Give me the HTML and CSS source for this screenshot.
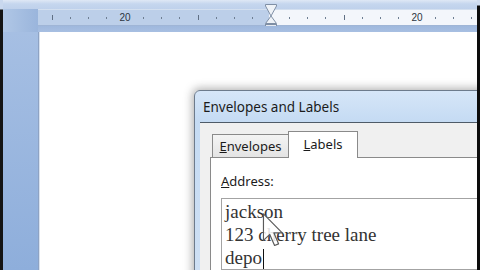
FILE: index.html
```html
<!DOCTYPE html>
<html>
<head>
<meta charset="utf-8">
<link rel="stylesheet" href="styles.css">
</head>
<body>
<div class="screen">
  <div class="edge edge-l"></div>
  <div class="main">
    <div class="topband"></div>
    <div class="ruler">
      <span class="cell"><i class="tall"></i></span>
      <span class="cell"><i class="dot"></i></span>
      <span class="cell"><i class="dot"></i></span>
      <span class="cell"><i class="dot"></i></span>
      <span class="cell num">20</span>
      <span class="cell"><i class="dot"></i></span>
      <span class="cell"><i class="dot"></i></span>
      <span class="cell"><i class="dot"></i></span>
      <span class="cell"><i class="tall"></i></span>
      <span class="cell"><i class="dot"></i></span>
      <span class="cell"><i class="dot"></i></span>
      <span class="cell"><i class="dot"></i></span>
      <span class="cell">
        <svg class="hourglass" width="12" height="27" viewBox="0 0 12 27">
          <path d="M0.5 0.5 H11.5 V2 L6 12 L0.5 2 Z" fill="#eef2f7" stroke="#7f8fa5"/>
          <path d="M6 12 L11.5 19.5 H0.5 Z" fill="#eef2f7" stroke="#7f8fa5"/>
          <rect x="0.5" y="20.5" width="11" height="6" fill="#e6ebf2" stroke="#7f8fa5"/>
        </svg>
      </span>
      <span class="cell"><i class="dot"></i></span>
      <span class="cell"><i class="dot"></i></span>
      <span class="cell"><i class="dot"></i></span>
      <span class="cell"><i class="tall"></i></span>
      <span class="cell"><i class="dot"></i></span>
      <span class="cell"><i class="dot"></i></span>
      <span class="cell"><i class="dot"></i></span>
      <span class="cell num">20</span>
      <span class="cell"><i class="dot"></i></span>
      <span class="cell"><i class="dot"></i></span>
      <span class="cell"><i class="dot"></i></span>
    </div>
    <div class="underband"></div>
    <div class="work">
      <div class="gutter"></div>
      <div class="page"></div>
    </div>

    <div class="dialog">
      <div class="titlebar">Envelopes and Labels</div>
      <div class="client">
        <div class="tabs">
          <div class="tab"><u>E</u>nvelopes</div>
          <div class="tab active"><u>L</u>abels</div>
        </div>
        <div class="panel">
          <div class="label"><u>A</u>ddress:</div>
          <div class="textbox">
            <div>jackson</div>
            <div>123 cherry tree lane</div>
            <div>depo<span class="caret"></span></div>
          </div>
        </div>
      </div>
    </div>

    <svg class="pointer" width="22" height="34" viewBox="0 0 12.5 20.5">
      <path d="M0.5 0.5 L0.5 16.5 L4.3 12.9 L7.2 19.6 L9.6 18.6 L6.8 12 L11.8 12 Z" fill="rgba(255,255,255,0.85)" stroke="#5a5a5a" stroke-width="0.7" stroke-linejoin="round"/>
    </svg>
  </div>
  <div class="edge edge-r"></div>
</div>
</body>
</html>
```
FILE: styles.css
```css
* { box-sizing: border-box; }
html, body { margin: 0; padding: 0; }
body { width: 480px; height: 270px; overflow: hidden; background: #a9c1e2; }

.screen {
  width: 480px;
  height: 270px;
  display: flex;
  overflow: hidden;
}

.edge { width: 3px; flex: none; background: #111; }
.edge-l { background: linear-gradient(#c9d8ee 0, #c9d8ee 9px, #141414 10px); }
.edge-r { background: linear-gradient(#cfdcef 0, #cfdcef 5px, #0c0c0c 6px); }

.main {
  position: relative;
  flex: 1;
  display: flex;
  flex-direction: column;
  overflow: hidden;
  background: linear-gradient(90deg, #b0c7e6 0, #9ab5dc 35px);
}

.topband {
  height: 9px;
  flex: none;
  background: linear-gradient(#dfe8f5, #c5d6ee 4px, #bfd1eb);
}

.ruler {
  height: 17px;
  flex: none;
  margin-left: 35px;
  padding-left: 4.9px;
  display: flex;
  align-items: center;
  border-top: 1px solid #d3dfef;
  border-bottom: 1px solid #9fb5d6;
  background: linear-gradient(90deg, #bccfe9 0, #bccfe9 231px, #f3f6fb 231px);
}

.cell {
  width: 18.25px;
  flex: none;
  height: 100%;
  display: flex;
  align-items: center;
  justify-content: center;
}

.dot { display: block; width: 1px; height: 2px; background: #6e7e92; }
.tall { display: block; width: 1px; height: 5px; background: #5f6f84; }
.num {
  font: 10px/1 "Liberation Sans", Arial, sans-serif;
  color: #2c3440;
}
.hourglass { flex: none; }

.underband {
  height: 6px;
  flex: none;
  margin-left: 35px;
  background: linear-gradient(#9fb8dd, #a8bfe2);
}

.work {
  flex: 1;
  display: flex;
}

.gutter {
  width: 35px;
  flex: none;
  background: linear-gradient(#a6bfe3, #8eaedb);
}

.page {
  flex: 1;
  background: #fff;
  border-left: 1px solid #8ea3c4;
  box-shadow: inset 1px 0 0 #d9e2ef;
}

/* dialog window */
.dialog {
  position: absolute;
  left: 191px;
  top: 90px;
  width: 300px;
  height: 200px;
  border: 1px solid #6d7b8c;
  border-radius: 6px 6px 0 0;
  background: linear-gradient(#d6e6f8, #c5dbf3 30px, #cfe0f4);
  box-shadow: 0 0 9px 2px rgba(40, 40, 40, 0.35);
  padding: 0 5px;
  display: flex;
  flex-direction: column;
}

.titlebar {
  height: 31px;
  flex: none;
  display: flex;
  align-items: center;
  padding-left: 3px;
  font: 13.5px "Noto Sans", "Open Sans", sans-serif;
  color: #1b1b1b;
}

.client {
  flex: 1;
  background: #f0f0f0;
  border-top: 1px solid #4f5b68;
  padding: 8px 0 0 10px;
  display: flex;
  flex-direction: column;
  font: 13px "Noto Sans", "Open Sans", sans-serif;
  color: #1b1b1b;
}

.tabs {
  height: 26px;
  flex: none;
  display: flex;
  align-items: flex-end;
  padding-left: 2px;
}

.tab {
  width: 77px;
  height: 23px;
  border: 1px solid #8a8a8a;
  border-bottom: none;
  background: linear-gradient(#f4f4f4, #e4e4e4);
  display: flex;
  align-items: center;
  justify-content: center;
}

.tab.active {
  width: 70px;
  height: 27px;
  margin-left: -1px;
  margin-bottom: -1px;
  background: #fff;
  position: relative;
  z-index: 1;
  padding-bottom: 2px;
}

.panel {
  flex: 1;
  background: #fff;
  border: 1px solid #8a8a8a;
  padding: 15px 0 0 10px;
}

.label {
  height: 17px;
  line-height: 17px;
}

.textbox {
  margin-top: 8px;
  width: 300px;
  border: 1px solid #a3a3a3;
  padding: 1px 0 0 3px;
  font: 19px/23px "Liberation Serif", "Times New Roman", serif;
  color: #333;
}

.caret {
  display: inline-block;
  width: 1px;
  height: 20px;
  background: #111;
  vertical-align: -5px;
  margin-left: 1px;
}

.pointer {
  position: absolute;
  left: 259px;
  top: 213px;
}
```
